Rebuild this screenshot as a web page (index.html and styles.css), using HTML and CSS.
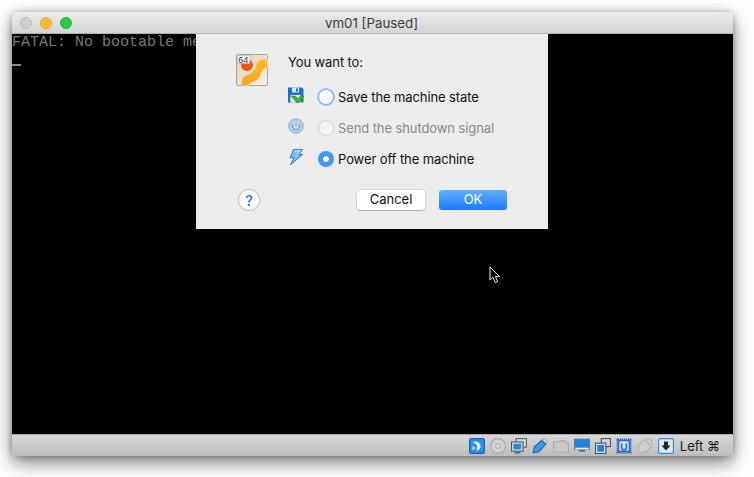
FILE: index.html
```html
<!DOCTYPE html>
<html lang="en">
<head>
<meta charset="utf-8">
<title>vm01 [Paused]</title>
<link rel="stylesheet" href="styles.css">
</head>
<body>
<div class="window">
  <header class="titlebar">
    <div class="lights">
      <span class="light light-off"></span>
      <span class="light light-min"></span>
      <span class="light light-max"></span>
    </div>
    <div class="title">vm01 [Paused]</div>
  </header>
  <main class="screen">
    <div class="console">FATAL: No bootable medium found! System halted.</div>
    <div class="console-cursor"></div>
    <section class="dialog">
      <div class="dialog-top">
        <svg class="os-icon" viewBox="0 0 32 32" width="32" height="32">
          <defs>
            <linearGradient id="bg" x1="0" y1="0" x2="1" y2="1"><stop offset="0" stop-color="#dfd0b8"/><stop offset="1" stop-color="#f6f2e9"/></linearGradient>
            <linearGradient id="or" x1="0" y1="0" x2="0" y2="1"><stop offset="0" stop-color="#fdb833"/><stop offset="1" stop-color="#f8a421"/></linearGradient>
          </defs>
          <rect x=".5" y=".5" width="31" height="31" rx="1.5" fill="url(#bg)" stroke="#a8a49c"/>
          <path d="M5.500 31 C5.500 25 7 22 11 21 C16 19.500 19 16 20 11 C21 7 24 5.300 28 5.300 L31.500 5.300 V14 C28 14 26 16 25 20 C23.500 25 19 27.500 16 28.500 C14 29 13 30 12.500 31.500 Z" fill="url(#or)" stroke="#fbdca0" stroke-width=".7"/>
          <circle cx="11" cy="11" r="6" fill="#ee5512"/>
          <rect x="1.300" y="1.300" width="12.500" height="8.200" fill="#fbfbfb" stroke="#b0b0b0" stroke-width=".6"/>
          <text x="2.300" y="8.500" class="os-badge">64</text>
        </svg>
        <div class="choices">
          <div class="prompt">You want to:</div>
          <div class="choice">
            <svg class="choice-icon" viewBox="0 0 16 16" width="16" height="16">
              <path d="M0 .5 H14 L15.500 2 V15.500 H0 Z" fill="#1c6fd6"/>
              <rect x="4" y=".5" width="7" height="5" fill="#dfe9f5"/>
              <rect x="8" y="1.500" width="2" height="3" fill="#1c6fd6"/>
              <rect x="2.500" y="8" width="10" height="7.500" fill="#f1f4f7"/>
              <path d="M3 9 H7.500 L10 11.500 L12.500 9 H16.500 L10.500 16 H9 Z" fill="#3cb52e" stroke="#1e7a1a" stroke-width=".5"/>
            </svg>
            <span class="radio radio-focus"></span>
            <span class="choice-label">Save the machine state</span>
          </div>
          <div class="choice">
            <svg class="choice-icon choice-icon-dim" viewBox="0 0 16 16" width="16" height="16">
              <circle cx="8" cy="8" r="7.300" fill="#a9c9ea" stroke="#7fa9d6"/>
              <circle cx="8" cy="8" r="5" fill="#c9dcf0"/>
              <path d="M5.500 5.800 A3.500 3.500 0 1 0 10.500 5.800" fill="none" stroke="#5b94d0" stroke-width="1.100"/>
              <path d="M8 4 V8" stroke="#5b94d0" stroke-width="1.100"/>
            </svg>
            <span class="radio radio-disabled"></span>
            <span class="choice-label choice-label-dim">Send the shutdown signal</span>
          </div>
          <div class="choice">
            <svg class="choice-icon" viewBox="0 0 16 16" width="16" height="16">
              <path d="M5.500 .5 H14.500 L11 5.500 H14.500 L2.500 15.800 L6 8.800 H2 Z" fill="#6fc0f7" stroke="#2a6fb4" stroke-width=".9"/>
              <path d="M6.500 1.800 H11.500 L8.500 6.500" fill="none" stroke="#e4f4ff" stroke-width=".9"/>
            </svg>
            <span class="radio radio-on"></span>
            <span class="choice-label">Power off the machine</span>
          </div>
        </div>
      </div>
      <div class="dialog-actions">
        <button class="help" type="button">?</button>
        <div class="buttons">
          <button class="btn" type="button">Cancel</button>
          <button class="btn btn-primary" type="button">OK</button>
        </div>
      </div>
    </section>
    <svg class="pointer" viewBox="0 0 12 18" width="12" height="18">
      <path d="M1 1 V14 L4 11.300 L6.300 16.500 L8.600 15.500 L6.400 10.500 H10.500 Z" fill="#000" stroke="#e8e8e8" stroke-width="1"/>
    </svg>
  </main>
  <footer class="statusbar">
    <svg class="st" viewBox="0 0 14 14" width="16" height="16"><rect x=".5" y=".5" width="13" height="13" rx="1.500" fill="#2f8fe6" stroke="#1c66b0"/><path d="M3 3.500 C7 2 11 4.500 10 8 C9.600 10 7.500 11 6 11 C8 9 8 6 3 3.500 Z M3 7 L6 9 L3 10.500 Z" fill="#dff0ff"/></svg>
    <svg class="st st-dim" viewBox="0 0 14 14" width="16" height="16"><circle cx="7" cy="7" r="6.500" fill="#cfcfcf" stroke="#a8a8a8"/><circle cx="7" cy="7" r="3.600" fill="#bbb" stroke="#e6e6e6"/><circle cx="7" cy="7" r="1.400" fill="#e8e8e8"/></svg>
    <svg class="st" viewBox="0 0 14 14" width="16" height="16"><rect x="4.500" y=".5" width="9" height="7.500" fill="#d8dde2" stroke="#5b6670"/><rect x=".5" y="3.500" width="10" height="8" fill="#e9edf0" stroke="#4c5660"/><rect x="2" y="5" width="7" height="5" fill="#2a86e0"/><rect x="3" y="12" width="5" height="1.500" fill="#5b6670"/></svg>
    <svg class="st" viewBox="0 0 14 14" width="16" height="16"><path d="M1 13 L2 8 L8.500 2 L12 5.500 L6 12 Z" fill="#3a9ce8" stroke="#1a66b2"/><path d="M9 1.500 L10.500 .5 L13.500 3.500 L12.400 5 Z" fill="#e6e6e6" stroke="#777" stroke-width=".6"/></svg>
    <svg class="st st-dim" viewBox="0 0 14 14" width="16" height="16"><path d="M.5 3.500 H5.500 L6.500 2.500 H11 V4 H13.500 V12.500 H.5 Z" fill="#c9c9c9" stroke="#a6a6a6"/></svg>
    <svg class="st" viewBox="0 0 14 14" width="16" height="16"><rect x=".5" y="1" width="13" height="9" fill="#1d84e4" stroke="#5d6872" stroke-width=".7"/><rect x="1" y="8.500" width="12" height="1.500" fill="#e8edf2"/><rect x="4.500" y="10.500" width="5" height="1.500" fill="#5d6872"/></svg>
    <svg class="st" viewBox="0 0 14 14" width="16" height="16"><rect x="5.500" y=".5" width="8" height="7" fill="#cfd5da" stroke="#4c5660"/><rect x=".5" y="4.500" width="9" height="9" fill="#e9edf0" stroke="#4c5660"/><rect x="2" y="6" width="6" height="6" fill="#1d84e4"/></svg>
    <svg class="st" viewBox="0 0 14 14" width="16" height="16"><rect x="1.500" y="1.500" width="11" height="11" fill="#3d7fe0" stroke="#2a5fc0" stroke-dasharray="1 .8" stroke-width="2"/><rect x="3" y="3" width="8" height="8" fill="#d7e8ff"/><path d="M5 4.500 V8.500 A2 2 0 0 0 9 8.500 V4.500" fill="none" stroke="#2a6fd6" stroke-width="1.400"/></svg>
    <svg class="st st-dim" viewBox="0 0 14 14" width="16" height="16"><path d="M1 10 C1 5 7 0 11 1 C14 2 13.500 6 10 10 C7 13.500 1 14 1 10 Z" fill="#d2d2d2" stroke="#adadad"/><path d="M8 2 L11 6" stroke="#a8a8a8"/></svg>
    <svg class="st" viewBox="0 0 14 14" width="16" height="16"><rect x=".5" y=".5" width="13" height="13" rx="1.500" fill="#d9eafb" stroke="#3a88d8"/><path d="M5.200 3 H8.800 V6.500 H11 L7 11 L3 6.500 H5.200 Z" fill="#222"/></svg>
    <span class="hostkey">Left ⌘</span>
  </footer>
</div>
</body>
</html>
```
FILE: styles.css
```css
* { box-sizing: border-box; }
html, body { margin: 0; height: 100%; background: #fff; }
body {
  padding: 12px 21px 21px 12px;
  font-family: "Inter", "Liberation Sans", sans-serif;
  overflow: hidden;
}
.window {
  width: 721px;
  height: 444px;
  display: flex;
  flex-direction: column;
  border-radius: 4px 4px 2px 2px;
  box-shadow: 0 7px 18px rgba(0, 0, 0, .5), 0 0 6px rgba(0, 0, 0, .25);
  overflow: hidden;
}
.titlebar {
  flex: 0 0 22px;
  display: flex;
  align-items: center;
  position: relative;
  background: linear-gradient(#ebebeb, #d4d4d4);
  border-bottom: 1px solid #b4b4b4;
}
.lights { display: flex; gap: 8px; padding-left: 8px; }
.light { width: 12px; height: 12px; border-radius: 50%; }
.light-off { background: #cfcfcf; border: 1px solid #bdbdbd; }
.light-min { background: #fcbc30; border: 1px solid #e8a823; }
.light-max { background: #29cc42; border: 1px solid #20b836; }
.title {
  flex: 1;
  text-align: center;
  padding-right: 62px;
  font-size: 13.300px;
  color: #3b3b3b;
}
.screen {
  flex: 1;
  position: relative;
  background: #000;
  min-height: 0;
  overflow: hidden;
}
.console {
  padding-top: 1px;
  font-family: "Liberation Mono", monospace;
  font-size: 15px;
  line-height: 16px;
  color: #7a7a7a;
  white-space: nowrap;
}
.console-cursor {
  width: 9px;
  height: 2px;
  margin-top: 13px;
  background: #8a8a8a;
}
.dialog {
  position: absolute;
  left: 184px;
  top: 0;
  width: 352px;
  height: 195px;
  background: #ececec;
  padding: 20px 40px 0 40px;
  display: flex;
  flex-direction: column;
}
.dialog-top { display: flex; gap: 20px; }
.os-icon { flex: none; }
.os-badge { font: 9px "Liberation Sans", sans-serif; fill: #333; }
.choices { display: flex; flex-direction: column; }
.prompt { font-size: 13px; letter-spacing: -.1px; line-height: 16px; color: #111; margin-bottom: 11px; }
.choice { display: flex; align-items: center; height: 31px; }
.choice-icon { flex: none; margin-right: 14px; margin-top: -3px; }
.choice-icon-dim { opacity: .9; }
.radio {
  flex: none;
  width: 16px;
  height: 16px;
  border-radius: 50%;
  margin-right: 4px;
}
.radio-focus { background: #fff; border: 1px solid #7fb0ec; box-shadow: 0 0 0 1px #9cc3f2; }
.radio-disabled { background: #f3f3f3; border: 1px solid #d4d4d4; }
.radio-on {
  background: radial-gradient(circle, #fff 0 2.600px, #3f97fb 3.200px);
}
.choice-label { font-size: 13px; letter-spacing: -.1px; color: #111; white-space: nowrap; }
.choice-label-dim { color: #8a8a8a; }
.dialog-actions {
  display: flex;
  align-items: center;
  justify-content: space-between;
  margin-top: 16px;
  padding-left: 3px;
}
.help {
  width: 20px;
  height: 20px;
  padding: 0;
  border-radius: 50%;
  border: none;
  background: #fff;
  box-shadow: 0 0 1px 1px rgba(0, 0, 0, .18);
  color: #2a7fe8;
  font: 600 14px "Inter", "Liberation Sans", sans-serif;
}
.buttons { display: flex; gap: 14px; margin-right: 1px; }
.btn {
  width: 68px;
  height: 20px;
  padding: 0 0 2px;
  border: none;
  border-radius: 3px;
  background: #fff;
  box-shadow: 0 0 0 .5px rgba(0, 0, 0, .15), 0 1px 1px rgba(0, 0, 0, .2);
  color: #111;
  font: 13px "Inter", "Liberation Sans", sans-serif;
}
.btn-primary {
  background: linear-gradient(#62aefc, #1a7bfb);
  color: #fff;
  box-shadow: none;
}
.pointer { position: absolute; left: 477px; top: 232px; }
.statusbar {
  flex: 0 0 22px;
  display: flex;
  align-items: center;
  justify-content: flex-end;
  gap: 5px;
  padding-right: 13px;
  background: linear-gradient(#d8d8d8, #bcbcbc);
  border-top: 1px solid #a8a8a8;
}
.st { flex: none; }
.st-dim { opacity: .85; }
.hostkey { margin-left: 1px; font-size: 13px; color: #1c1c1c; white-space: nowrap; }
```
